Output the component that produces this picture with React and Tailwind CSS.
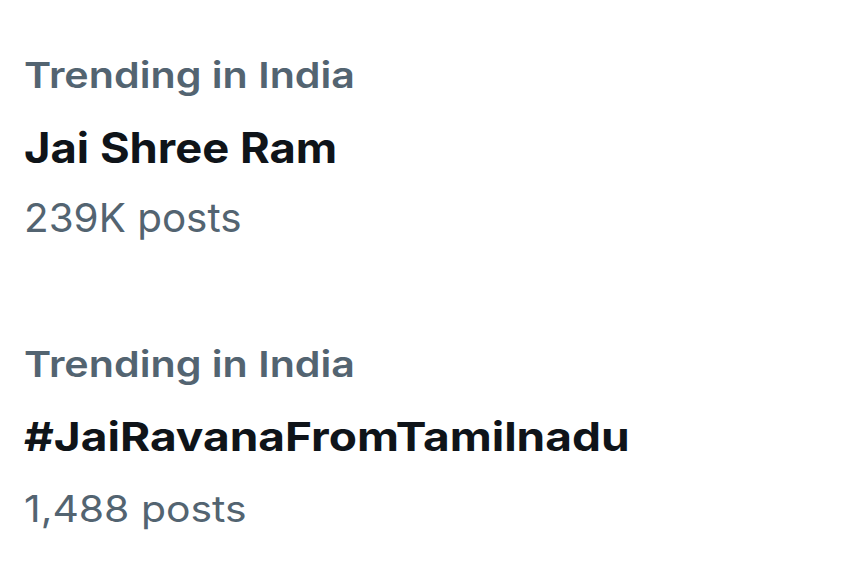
export default function App() {
  const font = { fontFamily: 'Inter, "Noto Sans", sans-serif' };
  return (
    <div className="w-[852px] h-[564px] bg-white overflow-hidden pl-[24px]" style={font}>
      <div className="pt-[51px] flex flex-col">
        <div className="text-[36px] leading-[48px] font-semibold text-[#536471] origin-left scale-x-[1.145]">Trending in India</div>
        <div className="mt-[21px] text-[42px] leading-[56px] font-bold text-[#0f1419] origin-left scale-x-[1.08]">Jai Shree Ram</div>
        <div className="mt-[16px] text-[40px] leading-[52px] text-[#536471] origin-left scale-x-[1.01]">239K posts</div>
      </div>
      <div className="mt-[96px] flex flex-col">
        <div className="text-[36px] leading-[48px] font-semibold text-[#536471] origin-left scale-x-[1.145]">Trending in India</div>
        <div className="mt-[21px] text-[40px] leading-[56px] font-bold text-[#0f1419] origin-left scale-x-[1.15]">#JaiRavanaFromTamilnadu</div>
        <div className="mt-[18px] text-[37px] leading-[52px] text-[#536471] origin-left scale-x-[1.105]">1,488 posts</div>
      </div>
    </div>
  );
}
